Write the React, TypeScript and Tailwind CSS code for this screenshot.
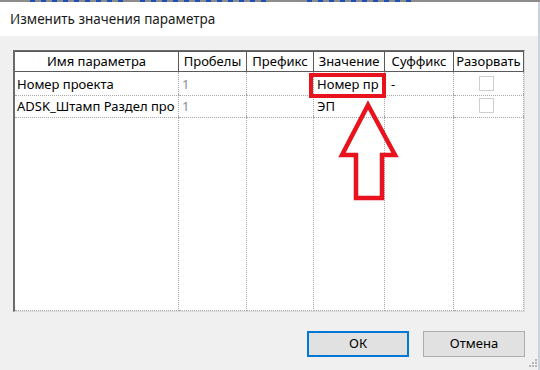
import React from 'react';

const cols = [164, 68, 67, 71, 69, 70];
const heads = ['Имя параметра', 'Пробелы', 'Префикс', 'Значение', 'Суффикс', 'Разорвать'];

const rows = [
  { name: 'Номер проекта', spaces: '1', prefix: '', value: 'Номер пр', suffix: '-' },
  { name: 'ADSK_Штамп Раздел про', spaces: '1', prefix: '', value: 'ЭП', suffix: '' },
];

const gridCols = 'grid grid-cols-[164px_68px_67px_71px_69px_70px]';

const Checkbox = () => (
  <div className="w-[15px] h-[15px] border border-[#cfcfcf] bg-white" />
);

const App = () => {
  return (
    <div
      className="relative w-[540px] h-[370px] overflow-hidden bg-[#f0f0f0] flex flex-col text-[13px] text-black"
      style={{ fontFamily: '"Noto Sans", "Open Sans", sans-serif' }}
    >
      {/* edge of the window behind */}
      <div className="h-[2px] bg-[#8c8c8c] flex">
        <div className="ml-[30px] w-[95px] h-[2px] bg-[repeating-linear-gradient(90deg,#1d4fb8_0_5px,transparent_5px_11px)]" />
        <div className="ml-[15px] w-[130px] h-[2px] bg-[repeating-linear-gradient(90deg,#1d4fb8_0_5px,transparent_5px_11px)]" />
        <div className="ml-[37px] w-[108px] h-[2px] bg-[repeating-linear-gradient(90deg,#1d4fb8_0_5px,transparent_5px_11px)]" />
      </div>

      <div className="flex-1 flex flex-col border-r-2 border-[#c9d3e0]">
        {/* title bar */}
        <div className="h-[34px] bg-white flex items-center pl-[10px] text-[13.5px] text-[#1a1a1a]">
          Изменить значения параметра
        </div>

        {/* table */}
        <div className="mt-[14px] ml-[13px] w-[512px] h-[262px] flex flex-col border-l-2 border-t border-[#6b6b6b] border-r border-b border-r-[#dcdcdc] border-b-[#dcdcdc] bg-white">
          <div className={`${gridCols} h-[21px] bg-white`}>
            {heads.map((h) => (
              <div
                key={h}
                className="flex items-center justify-center border-t border-r border-b border-[#5a5a5a] whitespace-nowrap overflow-hidden"
              >
                {h}
              </div>
            ))}
          </div>

          {rows.map((r) => (
            <div key={r.name} className={`${gridCols} h-[22px]`}>
              <div className="flex items-center pt-[3px] pl-[2px] border-r border-b border-dotted border-[#a8a8a8] whitespace-nowrap overflow-hidden">
                {r.name}
              </div>
              <div className="flex items-center pt-[3px] pl-[3px] border-r border-b border-dotted border-[#a8a8a8] text-[#8a8a96]">
                {r.spaces}
              </div>
              <div className="flex items-center pt-[3px] pl-[3px] border-r border-b border-dotted border-[#a8a8a8]">
                {r.prefix}
              </div>
              <div className="flex items-center pt-[3px] pl-[3px] border-r border-b border-dotted border-[#a8a8a8] whitespace-nowrap overflow-hidden">
                {r.value}
              </div>
              <div className="flex items-center pt-[3px] pl-[6px] border-r border-b border-dotted border-[#a8a8a8]">
                {r.suffix}
              </div>
              <div className="flex items-center justify-center pr-[4px] border-r border-b border-dotted border-[#a8a8a8]">
                <Checkbox />
              </div>
            </div>
          ))}

          <div className={`${gridCols} flex-1`}>
            {cols.map((w) => (
              <div key={w} className="border-r border-b border-dotted border-[#a8a8a8]" />
            ))}
          </div>
        </div>

        {/* buttons */}
        <div className="mt-[19px] flex justify-end gap-[14px] pr-[13px]">
          <button className="w-[102px] h-[26px] bg-[#e1e1e1] border-2 border-[#0078d7] text-[13px] text-black">
            ОК
          </button>
          <button className="w-[102px] h-[26px] bg-[#e1e1e1] border border-[#adadad] text-[13px] text-black">
            Отмена
          </button>
        </div>
      </div>

      {/* annotation: red frame around value */}
      <div className="absolute left-[309px] top-[73px] w-[77px] h-[25px] border-[4px] border-[#e8131c]" />

      {/* annotation: red arrow */}
      <svg className="absolute left-0 top-0" width="540" height="370" viewBox="0 0 540 370">
        <polygon
          points="368,105 395,155 382,155 382,198 356,198 356,155 342,155"
          fill="none"
          stroke="#e8131c"
          strokeWidth="4.5"
          strokeLinejoin="miter"
        />
      </svg>

      {/* resize grip */}
      <svg className="absolute right-[2px] bottom-[2px]" width="10" height="10" viewBox="0 0 10 10">
        <rect x="7" y="1" width="2" height="2" fill="#b8b8b8" />
        <rect x="4" y="4" width="2" height="2" fill="#b8b8b8" />
        <rect x="7" y="4" width="2" height="2" fill="#b8b8b8" />
        <rect x="1" y="7" width="2" height="2" fill="#b8b8b8" />
        <rect x="4" y="7" width="2" height="2" fill="#b8b8b8" />
        <rect x="7" y="7" width="2" height="2" fill="#b8b8b8" />
      </svg>
    </div>
  );
};

export default App;
